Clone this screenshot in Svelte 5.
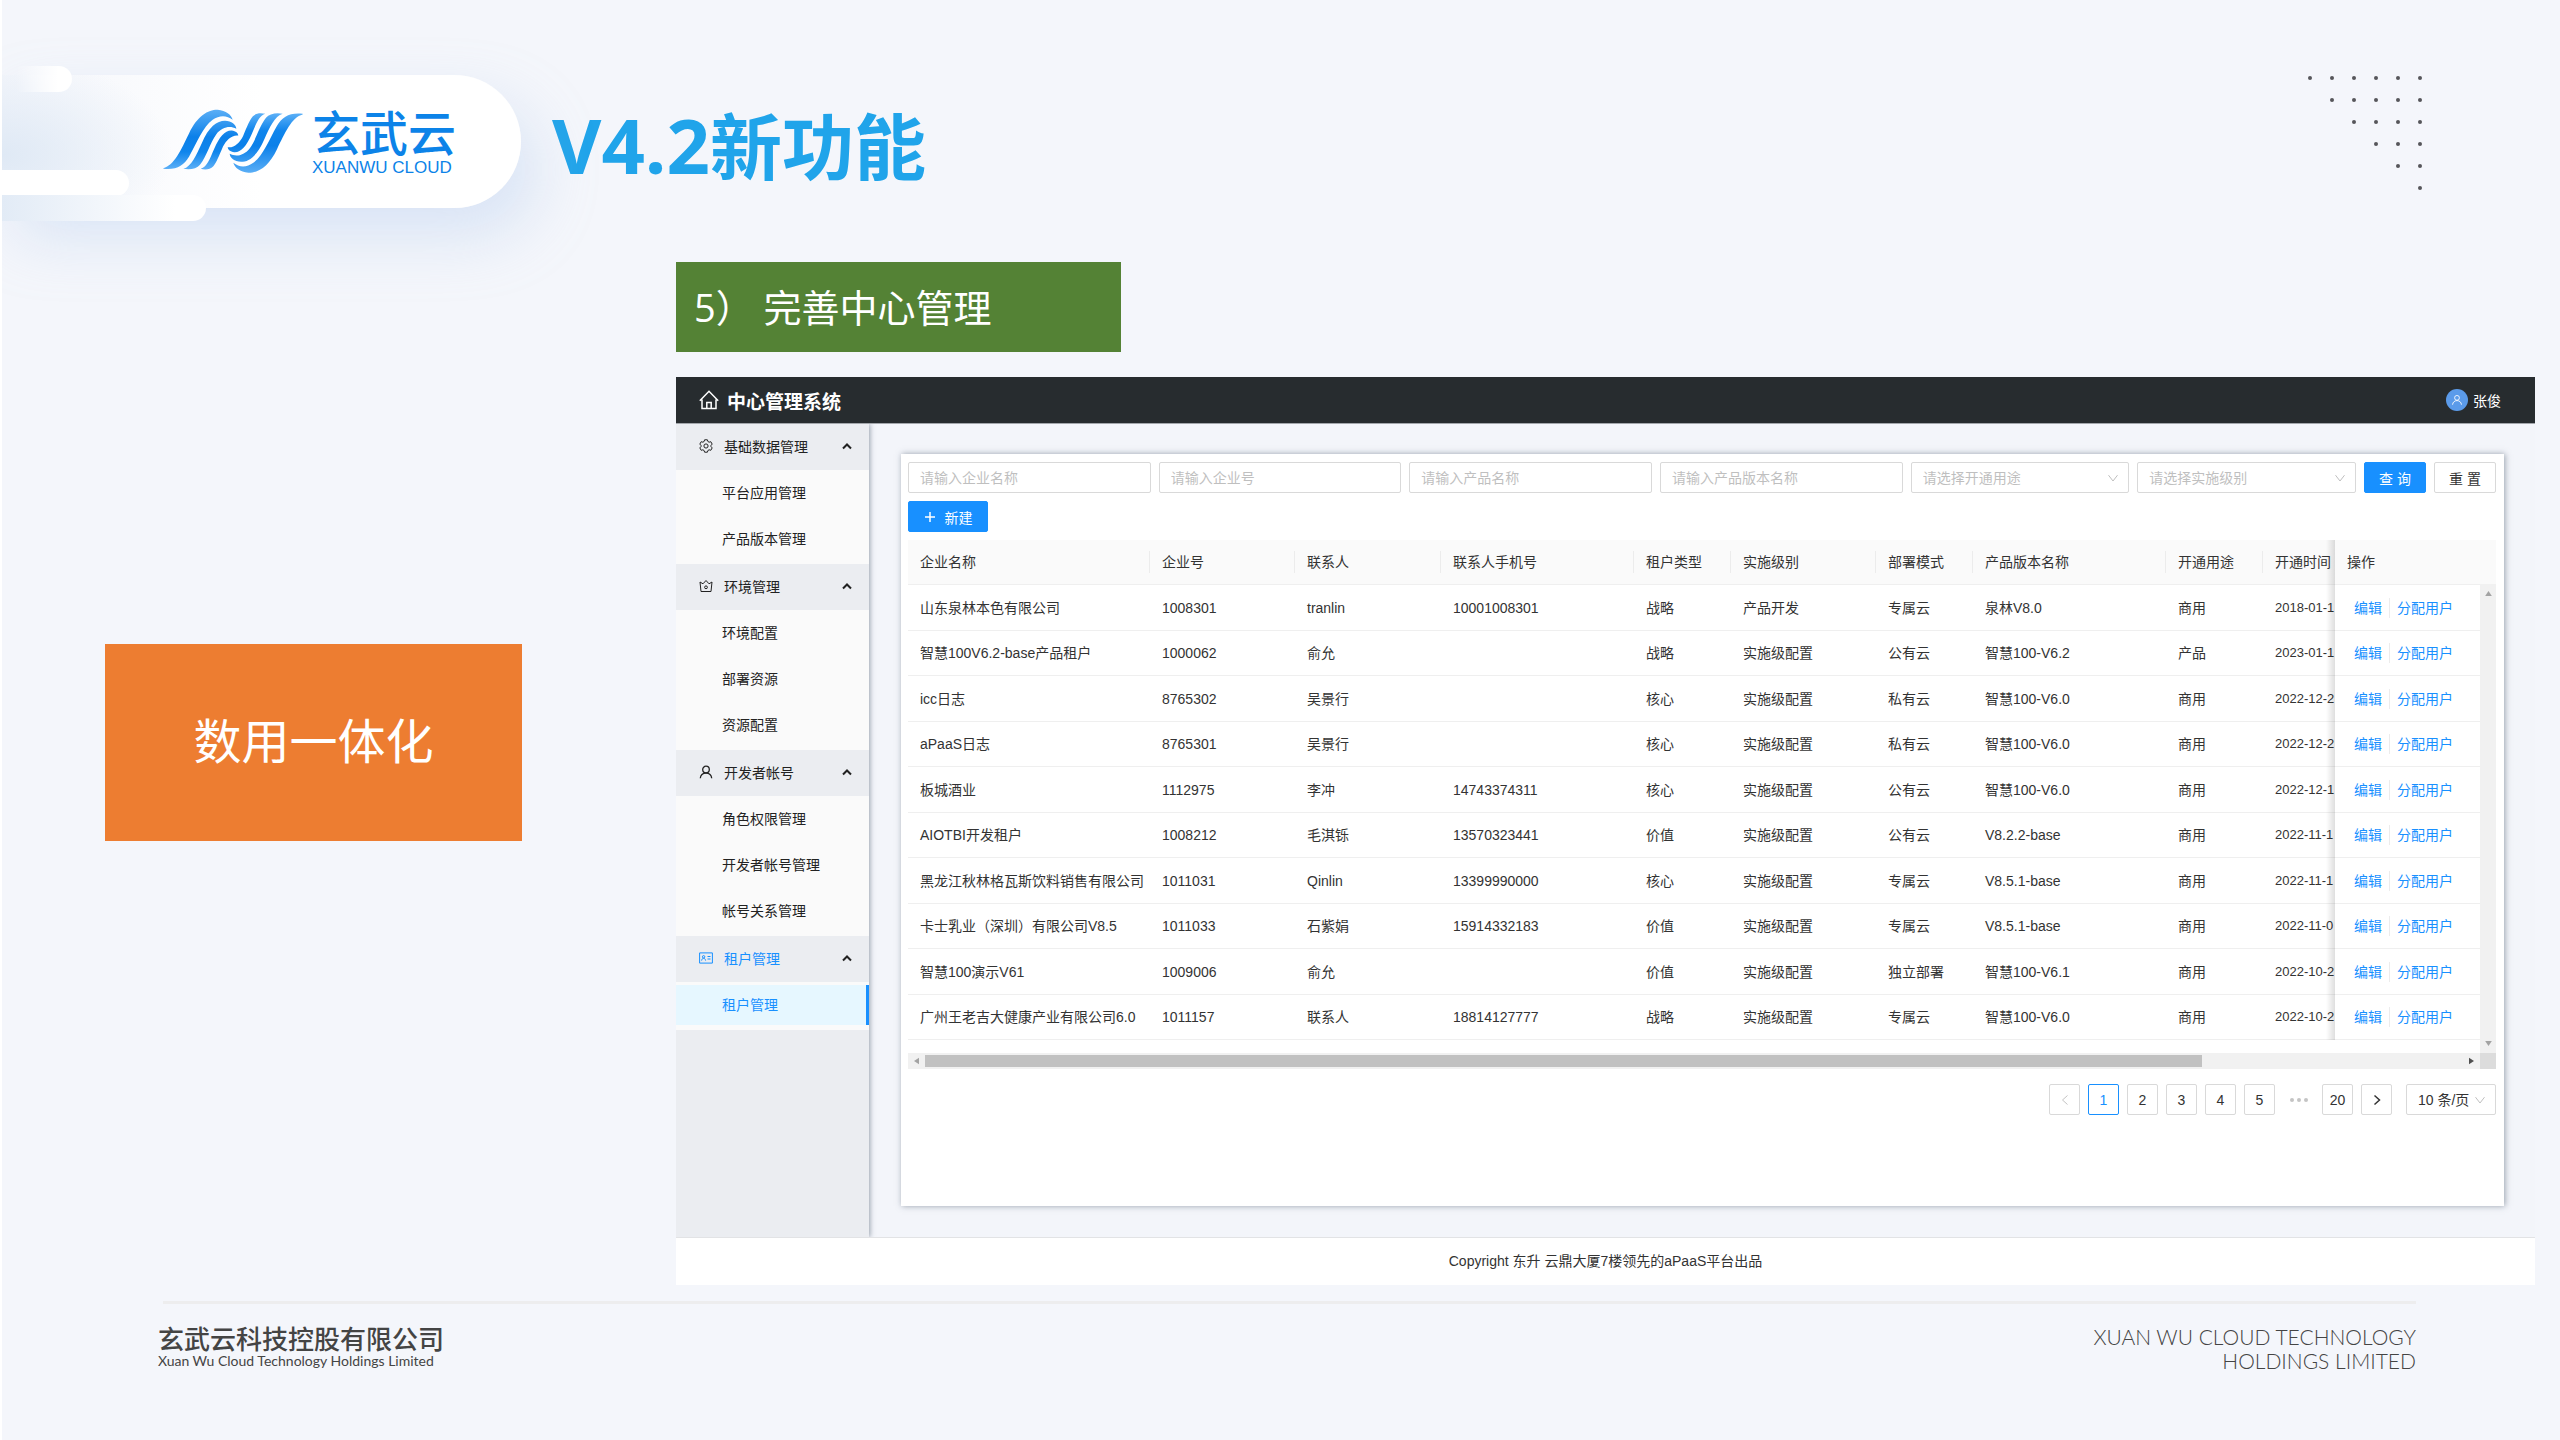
<script>
  const menu = [
    { icon: 'setting', label: '基础数据管理', items: ['平台应用管理', '产品版本管理'] },
    { icon: 'crown', label: '环境管理', items: ['环境配置', '部署资源', '资源配置'] },
    { icon: 'user', label: '开发者帐号', items: ['角色权限管理', '开发者帐号管理', '帐号关系管理'] },
    { icon: 'idcard', label: '租户管理', items: ['租户管理'], active: true }
  ];

  const textFilters = ['请输入企业名称', '请输入企业号', '请输入产品名称', '请输入产品版本名称'];
  const selectFilters = ['请选择开通用途', '请选择实施级别'];

  const columns = [
    '企业名称', '企业号', '联系人', '联系人手机号', '租户类型',
    '实施级别', '部署模式', '产品版本名称', '开通用途', '开通时间'
  ];

  const rows = [
    ['山东泉林本色有限公司', '1008301', 'tranlin', '10001008301', '战略', '产品开发', '专属云', '泉林V8.0', '商用', '2018-01-1'],
    ['智慧100V6.2-base产品租户', '1000062', '俞允', '', '战略', '实施级配置', '公有云', '智慧100-V6.2', '产品', '2023-01-1'],
    ['icc日志', '8765302', '吴景行', '', '核心', '实施级配置', '私有云', '智慧100-V6.0', '商用', '2022-12-2'],
    ['aPaaS日志', '8765301', '吴景行', '', '核心', '实施级配置', '私有云', '智慧100-V6.0', '商用', '2022-12-2'],
    ['板城酒业', '1112975', '李冲', '14743374311', '核心', '实施级配置', '公有云', '智慧100-V6.0', '商用', '2022-12-1'],
    ['AIOTBI开发租户', '1008212', '毛淇铄', '13570323441', '价值', '实施级配置', '公有云', 'V8.2.2-base', '商用', '2022-11-1'],
    ['黑龙江秋林格瓦斯饮料销售有限公司', '1011031', 'Qinlin', '13399990000', '核心', '实施级配置', '专属云', 'V8.5.1-base', '商用', '2022-11-1'],
    ['卡士乳业（深圳）有限公司V8.5', '1011033', '石紫娟', '15914332183', '价值', '实施级配置', '专属云', 'V8.5.1-base', '商用', '2022-11-0'],
    ['智慧100演示V61', '1009006', '俞允', '', '价值', '实施级配置', '独立部署', '智慧100-V6.1', '商用', '2022-10-2'],
    ['广州王老吉大健康产业有限公司6.0', '1011157', '联系人', '18814127777', '战略', '实施级配置', '专属云', '智慧100-V6.0', '商用', '2022-10-2']
  ];

  const pages = [1, 2, 3, 4, 5];

  // Triangular dot pattern in the top right corner
  const dots = [];
  for (let r = 0; r < 6; r++) for (let c = r; c < 6; c++) dots.push([c * 22 + 3, r * 22 + 3]);
</script>

{#snippet icon(name)}
  <svg class="icon" viewBox="0 0 14 14" fill="none" stroke="currentColor" aria-hidden="true">
    {#if name === 'setting'}
      <path d="M5.6 .8h2.8l.5 1.7 1.2.7 1.7-.5 1.4 2.4-1.2 1.2v1.4l1.2 1.2-1.4 2.4-1.7-.5-1.2.7-.5 1.7H5.600l-.5-1.700-1.200-.700-1.700.500L.8 8.900 2 7.700V6.300L.8 5.100l1.400-2.400 1.700.500 1.200-.700z" stroke-linejoin="round" />
      <circle cx="7" cy="7" r="2.1" />
    {:else if name === 'crown'}
      <path d="M1 3l3 1.800L7 1.500l3 3.300L13 3l-1 9.500H2z" stroke-linejoin="round" />
      <circle cx="7" cy="8.300" r="1.400" />
    {:else if name === 'user'}
      <circle cx="7" cy="4.500" r="3.300" stroke-width="1.300" />
      <path d="M1.300 13.300c.300-3.200 2.600-5.200 5.700-5.200s5.400 2 5.700 5.200" stroke-width="1.300" />
    {:else if name === 'idcard'}
      <path d="M.6 1.900h12.800v10.200H.600z" />
      <circle cx="4.600" cy="5.800" r="1.200" />
      <path d="M2.600 9.600c.200-1.500 1-2.300 2-2.300s1.800.800 2 2.300M8.500 5.500h3M8.500 8h3" />
    {/if}
  </svg>
{/snippet}

{#snippet down()}
  <svg class="down" viewBox="0 0 12 12" fill="none" stroke="currentColor" aria-hidden="true"><path d="M1.500 3.200L6 9l4.500-5.800" /></svg>
{/snippet}

<div class="slide">
  <header class="top">
    <div class="pill">
      <span class="bar one"></span>
      <span class="bar two"></span>
      <span class="bar three"></span>
      <svg class="mark" viewBox="24 40 420 200" aria-hidden="true">
        <defs>
          <linearGradient id="wave" gradientUnits="userSpaceOnUse" x1="0" y1="45" x2="0" y2="225">
            <stop offset="0" stop-color="#5aaef6" />
            <stop offset=".45" stop-color="#0b80e9" />
            <stop offset=".7" stop-color="#0f85ec" />
            <stop offset="1" stop-color="#5fb1f7" />
          </linearGradient>
          <g id="waves" fill="url(#wave)">
            <path d="M25 220C58 212 78 165 102 116C127 62 162 44 188 45C213 47 229 60 233 75C215 60 192 61 173 75C143 97 128 140 102 186C86 213 65 226 25 222Z" />
            <path d="M85 222C109 216 124 180 140 146C161 96 186 78 210 78C230 79 243 90 244 102C225 92 202 96 184 118C165 144 155 185 135 210C125 222 105 226 85 222Z" />
            <path d="M137 222C157 216 165 190 178 161C193 126 210 106 230 107C243 109 249 115 250 122C231 119 214 135 204 155C192 183 184 204 175 214C165 225 150 225 137 222Z" />
          </g>
        </defs>
        <use href="#waves" />
        <use href="#waves" transform="rotate(180 234 139.500)" />
      </svg>
      <div class="brand">
        <span class="cn">玄武云</span>
        <span class="en">XUANWU CLOUD</span>
      </div>
    </div>
    <h1><span>V4.2</span>新功能</h1>
    <svg class="dots" viewBox="0 0 116 116" fill="#55565a" aria-hidden="true">
      {#each dots as [x, y]}<circle cx={x} cy={y} r="2" />{/each}
    </svg>
  </header>

  <div class="body">
    <aside class="topic">数用一体化</aside>

    <div class="content">
      <h2>5） 完善中心管理</h2>

      <div class="app">
        <div class="appbar">
          <svg class="home" viewBox="0 0 20 20" fill="none" stroke="currentColor" stroke-width="1.500" aria-hidden="true">
            <path d="M.800 10.800L10 1.300l9.200 9.500M3 9.500v9h14v-9M7.800 18.500v-6h4.400v6" />
          </svg>
          <strong>中心管理系统</strong>
          <span class="avatar">
            <svg viewBox="0 0 14 14" fill="none" stroke="currentColor" aria-hidden="true">
              <circle cx="7" cy="4.500" r="2.800" />
              <path d="M1.800 12.500c.300-3 2.400-4.800 5.200-4.800s4.900 1.800 5.200 4.800" />
            </svg>
          </span>
          <span class="username">张俊</span>
        </div>

        <div class="workspace">
          <nav class="sidebar">
            {#each menu as group}
              <div class="group">
                <button class="grouphead" class:active={group.active} type="button">
                  {@render icon(group.icon)}
                  <span>{group.label}</span>
                  <svg class="up" viewBox="0 0 10 8" fill="none" stroke="#222" stroke-width="2" aria-hidden="true"><path d="M1 6.500L5 2.500l4 4" /></svg>
                </button>
                {#each group.items as item}
                  <a href="#menu" class:selected={group.active}><span>{item}</span></a>
                {/each}
              </div>
            {/each}
          </nav>

          <main>
            <section class="card">
              <form class="filters">
                {#each textFilters as label}
                  <input type="text" placeholder={label} aria-label={label} />
                {/each}
                {#each selectFilters as label}
                  <span class="select">
                    <select aria-label={label}><option>{label}</option></select>
                    {@render down()}
                  </span>
                {/each}
                <button class="btn primary" type="button">查 询</button>
                <button class="btn" type="button">重 置</button>
              </form>

              <button class="btn primary create" type="button">
                <svg viewBox="0 0 12 12" stroke="currentColor" stroke-width="1.500" aria-hidden="true"><path d="M6 1v10M1 6h10" /></svg>
                新建
              </button>

              <div class="tablebox">
                <table>
                  <thead>
                    <tr>
                      {#each columns as col}<th>{col}</th>{/each}
                      <th class="ops">操作</th>
                    </tr>
                  </thead>
                  <tbody>
                    {#each rows as row}
                      <tr>
                        {#each row as cell}<td>{cell}</td>{/each}
                        <td class="ops">
                          <div class="links"><a href="#edit">编辑</a><a href="#assign">分配用户</a></div>
                        </td>
                      </tr>
                    {/each}
                  </tbody>
                </table>
                <div class="vscroll" aria-hidden="true">
                  <svg viewBox="0 0 8 6"><path d="M4 0l4 6H0z" fill="#a3a3a3" /></svg>
                  <svg viewBox="0 0 8 6"><path d="M4 6l4-6H0z" fill="#a3a3a3" /></svg>
                </div>
              </div>
              <div class="hscroll" aria-hidden="true">
                <span class="arrow"><svg viewBox="0 0 6 8"><path d="M0 4l6-4v8z" fill="#a3a3a3" /></svg></span>
                <span class="track"><span class="thumb"></span></span>
                <span class="arrow"><svg viewBox="0 0 6 8"><path d="M6 4L0 0v8z" fill="#505050" /></svg></span>
                <span class="corner"></span>
              </div>

              <div class="pager">
                <button class="page off" type="button" aria-label="上一页">
                  <svg viewBox="0 0 12 12" fill="none" stroke="currentColor"><path d="M8.500 1.500L3.500 6l5 4.500" /></svg>
                </button>
                {#each pages as p}
                  <button class="page" class:current={p === 1} type="button">{p}</button>
                {/each}
                <span class="more" aria-hidden="true"><i></i><i></i><i></i></span>
                <button class="page" type="button">20</button>
                <button class="page" type="button" aria-label="下一页">
                  <svg viewBox="0 0 12 12" fill="none" stroke="currentColor" stroke-width="1.500"><path d="M3.500 1.500l5 4.500-5 4.500" /></svg>
                </button>
                <span class="select size">
                  <select aria-label="每页条数"><option>10 条/页</option></select>
                  {@render down()}
                </span>
              </div>
            </section>
          </main>
        </div>

        <div class="copyright">Copyright 东升 云鼎大厦7楼领先的aPaaS平台出品</div>
      </div>
    </div>
  </div>

  <footer>
    <div class="company">
      <span class="cn">玄武云科技控股有限公司</span>
      <span class="en">Xuan Wu Cloud Technology Holdings Limited</span>
    </div>
    <div class="legal">XUAN WU CLOUD TECHNOLOGY<br />HOLDINGS LIMITED</div>
  </footer>
</div>

<style>
  :global(body) {
    margin: 0;
    background: #f4f6fb;
  }

  .slide,
  .slide * {
    box-sizing: border-box;
  }

  .slide {
    display: flex;
    flex-direction: column;
    min-height: 100vh;
    overflow: hidden;
    border-left: 2px solid #fff;
    background: #f4f6fb;
    color: #333;
    font-family: 'Liberation Sans', 'Noto Sans CJK SC', sans-serif;
    font-size: 14px;
  }

  button,
  input,
  select {
    margin: 0;
    font: inherit;
    color: inherit;
  }

  a {
    text-decoration: none;
    color: inherit;
  }

  /* Slide header */
  .top {
    display: flex;
    align-items: center;
    height: 208px;
    padding: 75px 137px 0 0;
  }

  .pill {
    position: relative;
    flex: none;
    display: flex;
    align-items: center;
    gap: 9px;
    width: 519px;
    height: 133px;
    padding-left: 161px;
    border-radius: 0 67px 67px 0;
    background:
      radial-gradient(ellipse 170px 100px at 0 60%, #dfe9f5, rgba(236, 242, 250, 0)),
      linear-gradient(to right, #f4f6fb, #fff 50%);
    box-shadow: 16px 28px 60px rgba(170, 198, 235, 0.36);
  }

  .bar {
    position: absolute;
    left: 0;
    height: 26px;
    border-radius: 0 13px 13px 0;
  }

  .one {
    top: -9px;
    width: 70px;
    background: linear-gradient(to right, rgba(255, 255, 255, 0) 20%, #fff 80%);
  }

  .two {
    top: 95px;
    width: 127px;
    background: #fff;
  }

  .three {
    top: 120px;
    width: 204px;
    background: linear-gradient(to right, #e2ebf6, #fff 85%);
  }

  .mark {
    width: 140px;
    height: 67px;
  }

  .brand {
    display: flex;
    flex-direction: column;
    padding-top: 4px;
    color: #0c83e8;
  }

  .brand .cn {
    font-size: 48px;
    line-height: 48px;
    font-weight: 500;
  }

  .brand .en {
    font-size: 17px;
    line-height: 18px;
  }

  h1 {
    flex: 1;
    margin: 0 0 0 31px;
    padding-top: 4px;
    color: #20a4ea;
    font-size: 72px;
    line-height: 120px;
    font-weight: 700;
    font-family: 'Noto Sans CJK SC', sans-serif;
  }

  h1 span {
    font-family: 'Open Sans', sans-serif;
    font-size: 76px;
  }

  .dots {
    align-self: flex-start;
    width: 116px;
    height: 116px;
  }

  /* Slide body */
  .body {
    display: grid;
    grid-template-columns: 674px 1fr;
    align-items: start;
    padding: 54px 25px 0 0;
  }

  .topic {
    display: flex;
    align-items: center;
    justify-content: center;
    height: 197px;
    margin: 382px 154px 0 103px;
    padding-bottom: 10px;
    background: #ed7d31;
    color: #fff;
    font-size: 48px;
  }

  .content {
    display: flex;
    flex-direction: column;
    gap: 25px;
    min-width: 0;
  }

  h2 {
    align-self: flex-start;
    width: 445px;
    margin: 0;
    padding: 0 18px;
    background: #548235;
    color: #fff;
    font-family: 'Open Sans', 'Noto Sans CJK SC', sans-serif;
    font-size: 38px;
    line-height: 90px;
    font-weight: 400;
  }

  /* Management console */
  .appbar {
    display: flex;
    align-items: center;
    height: 46px;
    padding: 0 34px 0 23px;
    background: #272c2f;
    color: #fff;
  }

  .home {
    width: 20px;
    height: 20px;
    margin-right: 8px;
  }

  .appbar strong {
    flex: 1;
    font-size: 19px;
  }

  .avatar {
    display: flex;
    align-items: center;
    justify-content: center;
    width: 22px;
    height: 22px;
    margin-right: 5px;
    border-radius: 50%;
    background: #5b9bea;
  }

  .avatar svg {
    width: 12px;
    height: 12px;
  }

  .workspace {
    display: flex;
    border-top: 1px solid #a3a7ac;
    background: #f3f5fa;
  }

  .sidebar {
    flex: none;
    width: 193px;
    background: #ebedf1;
    box-shadow: 1px 0 5px rgba(60, 75, 95, 0.5);
    clip-path: inset(0 -10px 0 0);
  }

  .group {
    padding-bottom: 2px;
    background: #fafafa;
    color: #222;
  }

  .grouphead {
    display: flex;
    align-items: center;
    width: 100%;
    height: 46px;
    padding: 0 17px 2px 23px;
    border: 0;
    background: #ebedf1;
    text-align: left;
  }

  .grouphead.active {
    color: #1890ff;
  }

  .grouphead span {
    flex: 1;
  }

  .icon {
    width: 14px;
    height: 14px;
    margin-right: 11px;
  }

  .up {
    width: 10px;
    height: 8px;
  }

  .group a {
    display: flex;
    align-items: center;
    height: 46px;
    padding: 3px 0;
  }

  .group a span {
    width: 100%;
    padding-left: 46px;
    line-height: 40px;
  }

  .selected span {
    border-right: 3px solid #1890ff;
    background: #e6f7ff;
    color: #1890ff;
  }

  main {
    flex: 1;
    min-width: 0;
    padding: 30px 31px 31px 32px;
  }

  .card {
    min-height: 752px;
    padding: 8px 8px 8px 7px;
    background: #fff;
    box-shadow: 1px 0 6px rgba(60, 75, 95, 0.5);
  }

  .filters {
    display: flex;
    gap: 8px;
    margin-bottom: 8px;
  }

  input,
  select {
    width: 100%;
    height: 31px;
    padding: 0 11px;
    border: 1px solid #d9d9d9;
    border-radius: 2px;
    background: #fff;
    outline: 0;
    appearance: none;
  }

  .filters input {
    flex: 1 1 243px;
    min-width: 0;
  }

  input::placeholder {
    color: #bfbfbf;
    opacity: 1;
  }

  .select {
    position: relative;
    color: #bfbfbf;
  }

  .filters .select {
    flex: 1 1 219px;
  }

  .down {
    position: absolute;
    right: 10px;
    top: 10px;
    width: 12px;
    height: 12px;
    color: #bfbfbf;
    pointer-events: none;
  }

  .btn {
    flex: none;
    width: 62px;
    height: 31px;
    padding: 0;
    border: 1px solid #d9d9d9;
    border-radius: 2px;
    background: #fff;
  }

  .primary {
    border-color: #1890ff;
    background: #1890ff;
    color: #fff;
  }

  .create {
    display: flex;
    align-items: center;
    justify-content: center;
    gap: 9px;
    width: 80px;
    margin-bottom: 8px;
  }

  .create svg {
    width: 12px;
    height: 12px;
  }

  .tablebox {
    position: relative;
    padding-bottom: 13px;
  }

  table {
    width: 100%;
    table-layout: fixed;
    border-spacing: 0;
  }

  th,
  td {
    position: relative;
    height: 46px;
    padding: 0 0 0 12px;
    border-bottom: 1px solid #efefef;
    white-space: nowrap;
    text-align: left;
    font-weight: 400;
    line-height: 20px;
  }

  th {
    height: 45px;
    background: #fafafa;
    width: 145px;
  }

  tbody tr:nth-child(even) td {
    height: 45px;
  }

  td:nth-child(10) {
    font-size: 13px;
  }

  th:nth-child(1) {
    width: 242px;
  }

  th:nth-child(3) {
    width: 146px;
  }

  th:nth-child(4),
  th:nth-child(8) {
    width: 193px;
  }

  th:nth-child(5),
  th:nth-child(7),
  th:nth-child(9) {
    width: 97px;
  }

  th:nth-child(10) {
    width: 72px;
  }

  th:nth-child(11) {
    width: 161px;
  }

  th:nth-child(-n + 9)::after {
    content: '';
    position: absolute;
    right: 0;
    top: 11px;
    width: 1px;
    height: 22px;
    background: #ececec;
  }

  /* Shadow cast by the pinned action column */
  th:nth-child(10)::before,
  td:nth-child(10)::before {
    content: '';
    position: absolute;
    right: 0;
    top: 0;
    bottom: -1px;
    width: 9px;
    background: linear-gradient(to right, rgba(0, 0, 0, 0), rgba(0, 0, 0, 0.13));
  }

  .links {
    display: flex;
    padding-left: 7px;
    color: #1890ff;
  }

  .links a + a {
    margin-left: 7px;
    padding-left: 7px;
    border-left: 1px solid #ececec;
  }

  .vscroll {
    position: absolute;
    top: 44px;
    right: 0;
    bottom: 0;
    display: flex;
    flex-direction: column;
    align-items: center;
    justify-content: space-between;
    width: 16px;
    padding: 7px 0;
    background: #f1f1f1;
  }

  .vscroll svg {
    width: 7px;
    height: 5px;
  }

  .hscroll {
    display: flex;
    height: 16px;
    background: #f1f1f1;
  }

  .arrow {
    display: flex;
    align-items: center;
    justify-content: center;
    width: 17px;
  }

  .arrow svg {
    width: 5px;
    height: 8px;
  }

  .track {
    flex: 1;
    padding: 2px 0;
  }

  .thumb {
    display: block;
    width: 83%;
    height: 12px;
    background: #c1c1c1;
  }

  .corner {
    width: 16px;
    background: #dcdcdc;
  }

  .pager {
    display: flex;
    justify-content: flex-end;
    gap: 8px;
    margin-top: 15px;
  }

  .page {
    display: flex;
    align-items: center;
    justify-content: center;
    width: 31px;
    height: 31px;
    padding: 0;
    border: 1px solid #d9d9d9;
    border-radius: 2px;
    background: #fff;
  }

  .page svg {
    width: 12px;
    height: 12px;
  }

  .page.off {
    color: #c4c4c4;
  }

  .page.current {
    border-color: #1890ff;
    color: #1890ff;
  }

  .more {
    display: flex;
    align-items: center;
    justify-content: center;
    gap: 3px;
    width: 31px;
  }

  .more i {
    width: 4px;
    height: 4px;
    border-radius: 50%;
    background: #c4c4c4;
  }

  .size {
    width: 90px;
    margin-left: 6px;
    color: #333;
  }

  .copyright {
    padding: 12px 0;
    border-top: 1px solid #e2e3e5;
    background: #fff;
    text-align: center;
    line-height: 23px;
  }

  /* Slide footer */
  footer {
    display: flex;
    justify-content: space-between;
    margin: 16px 144px 0 161px;
    padding-top: 21px;
    border-top: 3px solid #ededee;
    color: #444;
  }

  .company {
    display: flex;
    flex-direction: column;
    margin-left: -5px;
    padding-top: 1px;
  }

  .company .cn {
    font-size: 26px;
    line-height: 28px;
    font-weight: 500;
  }

  .company .en {
    font-family: Lato, sans-serif;
    font-size: 14px;
    line-height: 14px;
  }

  .legal {
    font-family: Lato, sans-serif;
    font-size: 21px;
    line-height: 24px;
    font-weight: 300;
    text-align: right;
  }
</style>
